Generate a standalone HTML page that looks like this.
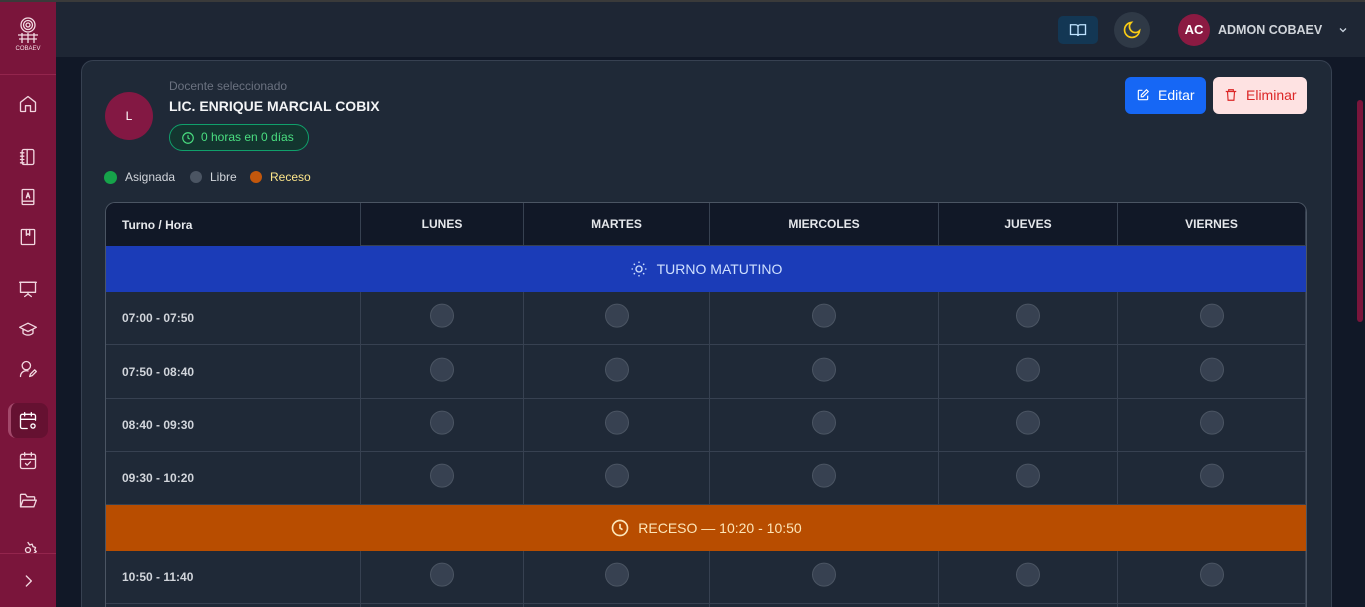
<!DOCTYPE html>
<html><head><meta charset="utf-8"><style>
*{box-sizing:border-box;margin:0;padding:0}
html,body{width:1365px;height:607px;overflow:hidden}
body{background:#111827;font-family:"Liberation Sans",Arial,sans-serif;position:relative;color:#e5e7eb}
.abs{position:absolute}
.sb{left:0;top:0;width:56px;height:607px;background:#7a153b}
.ic{position:absolute;left:18px;width:20px;height:20px}
.ic svg{width:20px;height:20px;fill:none;stroke:#f1d6df;stroke-width:1.6;stroke-linecap:round;stroke-linejoin:round}
.top{left:56px;top:0;width:1309px;height:58px;background:#1e2634;border-bottom:1px solid #111827}
.card{left:81px;top:60px;width:1251px;height:547px;background:#1f2937;border:1px solid #374151;border-bottom:none;border-radius:12px 12px 0 0}
.cell{position:absolute;border-right:1px solid #374151;border-bottom:1px solid #374151}
.hd{background:#111827;font-size:12px;font-weight:bold;color:#e5e7eb;display:flex;align-items:center;justify-content:center}
.time{font-size:12px;font-weight:bold;color:#d1d5db;display:flex;align-items:center;padding-left:16px}
.dot{position:absolute;width:24px;height:24px;border-radius:50%;background:#374151;border:1px solid #4b5563;left:50%;top:50%;transform:translate(-50%,-60%)}
</style></head><body>
<div class="abs" style="left:0;top:0;width:1365px;height:2px;background:#3a3a3a;z-index:5"></div>
<div class="abs sb">
 <div class="abs" style="left:15px;top:16px;width:26px;height:40px;text-align:center">
  <svg width="26" height="28" viewBox="0 0 26 28" style="fill:none;stroke:#f3dbe3;stroke-width:1.3"><circle cx="13" cy="9" r="7"/><circle cx="13" cy="9" r="4.5"/><circle cx="13" cy="9" r="2"/><path d="M3 19h20M4 23h18M7 17v10M13 17v10M19 17v10"/></svg>
  <div style="font-size:6px;color:#f3dbe3;line-height:6px;margin-top:-3px">COBAEV</div>
 </div>
 <div class="abs" style="left:0;top:74px;width:56px;height:1px;background:#93254d"></div>
 <div class="ic" style="top:94px"><svg viewBox="0 0 24 24"><path d="M3 10l9-7 9 7v10a1 1 0 0 1-1 1h-5v-7H9v7H4a1 1 0 0 1-1-1z"/></svg></div>
 <div class="ic" style="top:147px"><svg viewBox="0 0 24 24"><rect x="5" y="3" width="14" height="18" rx="2"/><path d="M3 7h4M3 11h4M3 15h4M3 19h4M11 3v18"/></svg></div>
 <div class="ic" style="top:187px"><svg viewBox="0 0 24 24"><rect x="5" y="3" width="14" height="18" rx="1"/><path d="M5 17h14M10 13l2-6 2 6M10.5 11h3"/></svg></div>
 <div class="ic" style="top:227px"><svg viewBox="0 0 24 24"><rect x="4" y="3" width="16" height="18" rx="1"/><path d="M10 3v7l2-2 2 2V3"/></svg></div>
 <div class="ic" style="top:279px"><svg viewBox="0 0 24 24"><rect x="3" y="4" width="18" height="12"/><path d="M2 4h20M12 16v2M8 21l4-3 4 3"/></svg></div>
 <div class="ic" style="top:319px"><svg viewBox="0 0 24 24"><path d="M2 10l10-5 10 5-10 5z M6 12v5c3 3 9 3 12 0v-5"/></svg></div>
 <div class="ic" style="top:359px"><svg viewBox="0 0 24 24"><circle cx="10" cy="8" r="5"/><path d="M3 21a7 7 0 0 1 9-6.7M14 21l1-3 5-5 2 2-5 5z"/></svg></div>
 <div class="abs" style="left:8px;top:403px;width:40px;height:35px;border-radius:8px;background:#651131;border-left:3px solid #a3496b"></div>
 <div class="ic" style="top:411px"><svg viewBox="0 0 24 24" style="stroke:#fff"><path d="M21 11V6a2 2 0 0 0-2-2H5a2 2 0 0 0-2 2v13a2 2 0 0 0 2 2h6M3 10h18M8 2v4M16 2v4"/><circle cx="18" cy="18" r="2.5"/></svg></div>
 <div class="ic" style="top:451px"><svg viewBox="0 0 24 24"><rect x="3" y="4" width="18" height="17" rx="2"/><path d="M3 10h18M8 2v4M16 2v4M9 15l2 2 4-4"/></svg></div>
 <div class="ic" style="top:491px"><svg viewBox="0 0 24 24"><path d="M3 19V5a1 1 0 0 1 1-1h5l2 3h8a1 1 0 0 1 1 1v2M3 19l3-8h16l-3 8z"/></svg></div>
 <div class="ic" style="top:540px"><svg viewBox="0 0 24 24"><circle cx="12" cy="12" r="3"/><path d="M12 3l2 3 3-1 1 3 3 1-1 3 2 2-3 2 1 3-3 1-1 3-3-1-2 2"/></svg></div>
 <div class="abs" style="left:0;top:553px;width:56px;height:54px;background:#7a153b;border-top:1px solid #93254d"></div>
 <div class="ic" style="top:571px"><svg viewBox="0 0 24 24"><path d="M10 6l6 6-6 6"/></svg></div>
</div>
<div class="abs top">
 <div class="abs" style="left:1002px;top:16px;width:40px;height:28px;border-radius:5px;background:#133754"><svg width="18" height="18" viewBox="0 0 24 24" style="position:absolute;left:11px;top:5px;fill:none;stroke:#bfe3ff;stroke-width:1.8"><path d="M2 5h7a3 3 0 0 1 3 3v12a2 2 0 0 0-2-2H2zM22 5h-7a3 3 0 0 0-3 3v12a2 2 0 0 1 2-2h8z"/></svg></div>
 <div class="abs" style="left:1058px;top:12px;width:36px;height:36px;border-radius:50%;background:#2f3946"><svg width="20" height="20" viewBox="0 0 24 24" style="position:absolute;left:8px;top:8px;fill:none;stroke:#facc15;stroke-width:2"><path d="M21 13A9 9 0 1 1 11 3a7 7 0 0 0 10 10z"/></svg></div>
 <div class="abs" style="left:1122px;top:14px;width:32px;height:32px;border-radius:50%;background:#8b1a42;color:#fff;font-size:13px;font-weight:bold;text-align:center;line-height:32px">AC</div>
 <div class="abs" style="left:1162px;top:23px;font-size:12.5px;font-weight:bold;color:#d1d5db">ADMON COBAEV</div>
 <svg class="abs" style="left:1281px;top:24px" width="12" height="12" viewBox="0 0 24 24" fill="none" stroke="#cbd5e1" stroke-width="2.5"><path d="M6 9l6 6 6-6"/></svg>
</div>
<div class="abs" style="left:1357px;top:100px;width:6px;height:222px;border-radius:3px;background:#7a153b"></div>
<div class="abs card"></div>
<div class="abs" style="left:105px;top:92px;width:48px;height:48px;border-radius:50%;background:#831843;color:#fff;font-size:12px;text-align:center;line-height:48px">L</div>
<div class="abs" style="left:169px;top:79px;font-size:12px;color:#6b7280">Docente seleccionado</div>
<div class="abs" style="left:169px;top:98px;font-size:14px;font-weight:bold;color:#f3f4f6">LIC. ENRIQUE MARCIAL COBIX</div>
<div class="abs" style="left:169px;top:124px;width:140px;height:27px;border-radius:14px;border:1px solid #10a06b;background:#13352f;color:#4ade80;font-size:12px;line-height:25px;padding-left:31px">0 horas en 0 días<svg style="position:absolute;left:11px;top:6px" width="14" height="14" viewBox="0 0 24 24" fill="none" stroke="#4ade80" stroke-width="2"><circle cx="12" cy="12" r="9"/><path d="M12 7v5l3 2"/></svg></div>
<div class="abs" style="left:104px;top:171px;width:13px;height:13px;border-radius:50%;background:#16a34a"></div>
<div class="abs" style="left:125px;top:170px;font-size:12px;color:#d1d5db">Asignada</div>
<div class="abs" style="left:190px;top:171px;width:12px;height:12px;border-radius:50%;background:#4b5563"></div>
<div class="abs" style="left:210px;top:170px;font-size:12px;color:#d1d5db">Libre</div>
<div class="abs" style="left:250px;top:171px;width:12px;height:12px;border-radius:50%;background:#c2570c"></div>
<div class="abs" style="left:270px;top:170px;font-size:12px;color:#fde68a">Receso</div>
<div class="abs" style="left:1125px;top:77px;width:81px;height:37px;border-radius:6px;background:#1667f5;color:#fff;font-size:14px;line-height:37px;padding-left:33px">Editar<svg style="position:absolute;left:11px;top:11px" width="14" height="14" viewBox="0 0 24 24" fill="none" stroke="#fff" stroke-width="2"><path d="M11 4H5a1 1 0 0 0-1 1v14a1 1 0 0 0 1 1h14a1 1 0 0 0 1-1v-6M18 3l3 3-9 9H9v-3z"/></svg></div>
<div class="abs" style="left:1213px;top:77px;width:94px;height:37px;border-radius:6px;background:#fee2e2;color:#dc2626;font-size:14px;line-height:37px;padding-left:33px">Eliminar<svg style="position:absolute;left:11px;top:11px" width="14" height="14" viewBox="0 0 24 24" fill="none" stroke="#dc2626" stroke-width="2"><path d="M3 6h18M8 6V3h8v3M6 6l1 15h10l1-15"/></svg></div>
<div class="abs" style="left:105px;top:202px;width:1202px;height:405px;border:1px solid #4b5563;border-bottom:none;border-radius:10px 10px 0 0;overflow:hidden;background:#1f2937">
<div id="t" style="position:relative;width:1200px;height:405px"></div>
</div>
<script>
const t=document.getElementById('t');
const cols=[0,255,418,604,833,1012,1200];
const names=['Turno / Hora','LUNES','MARTES','MIERCOLES','JUEVES','VIERNES'];
let h='';
for(let i=0;i<6;i++){h+=`<div class="cell hd" style="left:${cols[i]}px;top:0;width:${cols[i+1]-cols[i]}px;height:43px;${i==0?'justify-content:flex-start;padding-left:16px;border-bottom:none':''}">${names[i]}</div>`}
h+=`<div class="abs" style="left:0;top:43px;width:1200px;height:46px;background:#1b3cb8;display:flex;align-items:center;justify-content:center;color:#cfe0ff;font-size:14px"><svg width="18" height="18" viewBox="0 0 24 24" fill="none" stroke="#cfe0ff" stroke-width="1.8" style="margin-right:9px"><circle cx="12" cy="12" r="4"/><path d="M12 2v2M12 20v2M2 12h2M20 12h2M5 5l1.5 1.5M17.5 17.5L19 19M5 19l1.5-1.5M17.5 6.5L19 5"/></svg>TURNO MATUTINO</div>`;
const rows=[['07:00 - 07:50',89,53],['07:50 - 08:40',142,54],['08:40 - 09:30',196,53],['09:30 - 10:20',249,53],['10:50 - 11:40',348,53],['',401,4]];
for(const [lab,y,hh] of rows){for(let i=0;i<6;i++){h+=`<div class="cell ${i==0?'time':''}" style="left:${cols[i]}px;top:${y}px;width:${cols[i+1]-cols[i]}px;height:${hh}px;${hh<10?'border-bottom:none':''}">${i==0?lab:(lab?'<div class="dot"></div>':'')}</div>`}}
h+=`<div class="abs" style="left:0;top:302px;width:1200px;height:46px;background:#b84d00;display:flex;align-items:center;justify-content:center;color:#fde6b8;font-size:14px"><svg width="20" height="20" viewBox="0 0 24 24" fill="none" stroke="#fde6b8" stroke-width="2" style="margin-right:8px"><circle cx="12" cy="12" r="9"/><path d="M12 7v5l3 2"/></svg>RECESO — 10:20 - 10:50</div>`;
t.innerHTML=h;
</script>
</body></html>
